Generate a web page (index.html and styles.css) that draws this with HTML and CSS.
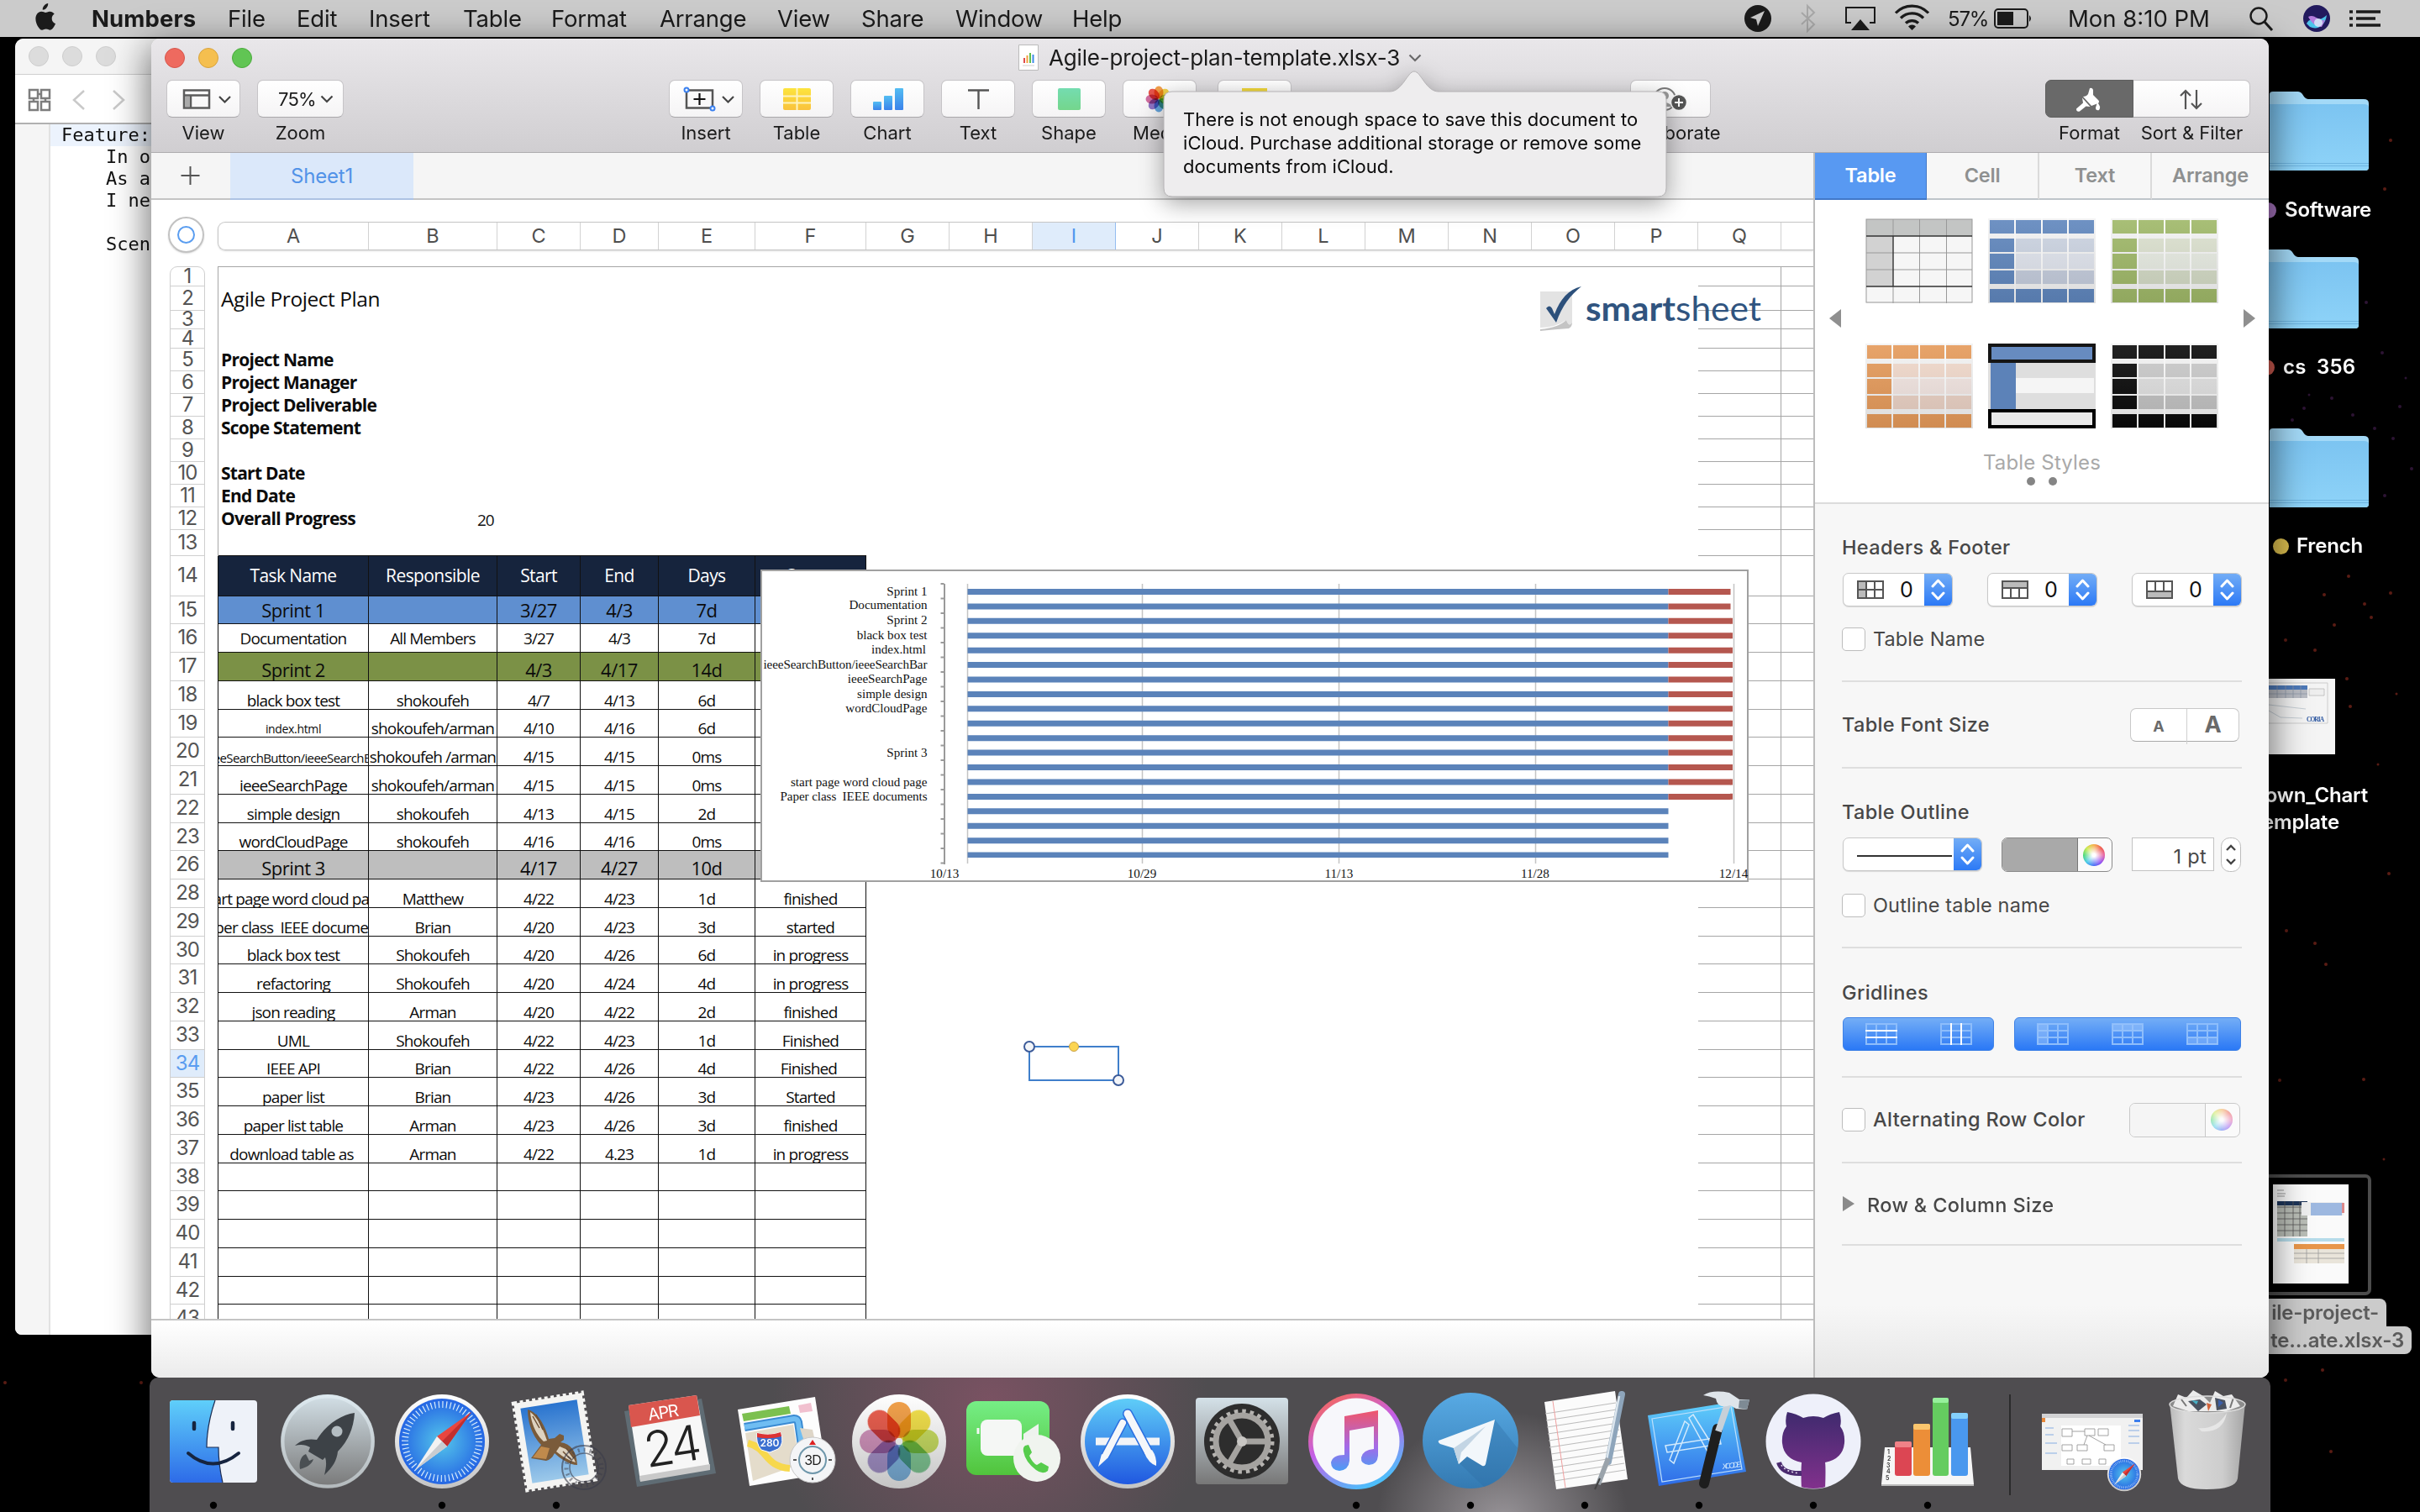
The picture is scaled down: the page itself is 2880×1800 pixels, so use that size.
FILE: index.html
```html
<!DOCTYPE html>
<html lang="en">
<head>
<meta charset="utf-8">
<title>Agile-project-plan-template.xlsx-3</title>
<link rel="stylesheet" href="styles.css">
</head>
<body>
<svg class="defs" aria-hidden="true">
  <defs>
    <linearGradient id="yel" x1="0" y1="0" x2="0" y2="1"><stop offset="0" stop-color="#fde43d"/><stop offset="1" stop-color="#f9c23c"/></linearGradient>
    <linearGradient id="cht" x1="0" y1="0" x2="0" y2="1"><stop offset="0" stop-color="#53bdf3"/><stop offset="1" stop-color="#3b82ea"/></linearGradient>
    <linearGradient id="shp" x1="0" y1="0" x2="0" y2="1"><stop offset="0" stop-color="#74dcb0"/><stop offset="1" stop-color="#74d68c"/></linearGradient>
    <linearGradient id="fold" x1="0" y1="0" x2="0" y2="1"><stop offset="0" stop-color="#7cc4f1"/><stop offset="1" stop-color="#8ed3f8"/></linearGradient>
    <linearGradient id="glass" x1="0" y1="0" x2="0" y2="1"><stop offset="0" stop-color="#fff" stop-opacity=".1"/><stop offset="1" stop-opacity=".09"/></linearGradient>
    <symbol id="folder" viewBox="0 0 118 94">
      <path d="M0 3Q0 0 4 0H34C40 0 40 9 46 9H112Q118 9 118 14V90Q118 94 114 94H0Z" fill="#a3d9f7"/>
      <path d="M0 15H112Q118 15 118 19V90Q118 94 114 94H0Z" fill="url(#fold)"/>
      <path d="M0 85.500H118M0 88.500H118" stroke="#6fb6e2" stroke-width="1"/>
    </symbol>
    <symbol id="tstyle" viewBox="0 0 128 101">
      <rect width="128" height="101" fill="#f3f3f3"/>
      <path d="M2 2h124v16H2zM2 84h124v16H2zM2 24h30v16H2zM2 42h30v18H2zM2 62h30v16H2z" fill="var(--main)"/>
      <path d="M32 24h94v16H32z" fill="var(--l1)"/><path d="M32 42h94v18H32z" fill="var(--l2)"/><path d="M32 62h94v16H32z" fill="var(--l3)"/>
      <path d="M32 0v101M64 0v101M95 0v101" stroke="#fafafa" stroke-width="2"/>
      <rect width="128" height="101" fill="url(#glass)"/>
    </symbol>
    <symbol id="updown" viewBox="0 0 33 40"><path d="M10 16l6.500-7 6.500 7M10 24l6.500 7 6.500-7" fill="none" stroke="#fff" stroke-width="3" stroke-linecap="round" stroke-linejoin="round"/></symbol>
    <symbol id="tgrid" viewBox="0 0 38 26"><path d="M1 1h36v24H1zM1 9h36M1 17h36M13 1v24M25 1v24" fill="none" stroke="#8dbdfb" stroke-width="2"/></symbol>
  </defs>
</svg>

<svg class="stars" viewBox="0 0 2880 1800" aria-hidden="true">
  <g fill="#5a1c14"><circle cx="2795" cy="686" r="2"/><circle cx="2845" cy="706" r="2"/><circle cx="2766" cy="708" r="2"/><circle cx="2814" cy="719" r="2"/><circle cx="2778" cy="744" r="2"/><circle cx="2822" cy="735" r="2"/><circle cx="2755" cy="774" r="2"/><circle cx="2720" cy="762" r="2"/><circle cx="2793" cy="808" r="2"/><circle cx="2797" cy="841" r="2"/><circle cx="2843" cy="1040" r="2"/><circle cx="2755" cy="1123" r="2"/><circle cx="2721" cy="1108" r="2"/><circle cx="2768" cy="1148" r="2"/><circle cx="2813" cy="1285" r="2"/><circle cx="2713" cy="1286" r="2"/><circle cx="2838" cy="225" r="2"/><circle cx="2845" cy="167" r="2"/><circle cx="2852" cy="826" r="1.500"/><circle cx="2830" cy="910" r="1.500"/><circle cx="2780" cy="1520" r="2"/><circle cx="2764" cy="1631" r="2"/><circle cx="2720" cy="1643" r="2"/><circle cx="2774" cy="1728" r="2"/><circle cx="2837" cy="1380" r="1.500"/><circle cx="6" cy="1646" r="2"/><circle cx="168" cy="1646" r="2"/></g>
  <g fill="#2c1433"><circle cx="2816" cy="360" r="2"/><circle cx="2835" cy="420" r="2"/><circle cx="2742" cy="486" r="2"/><circle cx="2800" cy="494" r="2"/><circle cx="2856" cy="484" r="2"/><circle cx="2728" cy="500" r="2"/><circle cx="2826" cy="510" r="2"/><circle cx="2848" cy="522" r="2"/><circle cx="2775" cy="474" r="2"/><circle cx="2870" cy="558" r="2"/><circle cx="2838" cy="590" r="2"/><circle cx="2748" cy="470" r="1.500"/><circle cx="2863" cy="450" r="1.500"/></g>
</svg>

<header class="menubar">
  <svg class="apple" viewBox="1.200 0 22.600 32"><path d="M18 0c.4 3-2.500 7.200-6 7.200C11.600 4 14.800.4 18 0zM22.300 17c0-3.400 2.600-5 2.800-5.200-1.600-2.200-4-2.600-4.800-2.700-2.100-.2-4 1.200-5.100 1.200S12.500 9.200 10.800 9.200C8.500 9.200 6.400 10.500 5.300 12.400c-2.500 4.200-.7 10.500 1.700 13.900 1.100 1.700 2.500 3.600 4.300 3.500 1.700-.1 2.400-1.100 4.500-1.100s2.700 1.100 4.500 1.100c1.900 0 3.100-1.700 4.200-3.400 1.300-1.900 1.800-3.700 1.900-3.800-.2-.1-4.100-1.500-4.100-5.600z" fill="#1b1b1b" transform="translate(-3 1)"/></svg>
  <nav class="menus"><b>Numbers</b><span>File</span><span>Edit</span><span>Insert</span><span>Table</span><span>Format</span><span>Arrange</span><span>View</span><span>Share</span><span>Window</span><span>Help</span></nav>
  <svg class="tray" viewBox="0 0 240 44">
    <circle cx="17" cy="22" r="16" fill="#1b1b1b"/><path d="M25 13L8 21l7 2 2 8z" fill="#ccc"/>
    <path d="M69 15l15 14-8 8V7l8 8-15 14" fill="none" stroke="#a9a9a9" stroke-width="2"/>
    <path d="M128 27h-6V9h34v18h-6" fill="none" stroke="#1b1b1b" stroke-width="2"/><path d="M139 23l11 13h-22z" fill="#1b1b1b"/>
    <g fill="none" stroke="#1b1b1b" stroke-width="3.200"><path d="M181 15.500a27 27 0 0 1 39 0"/><path d="M187 21.500a19 19 0 0 1 27 0"/><path d="M193 27.500a11 11 0 0 1 15 0"/></g><path d="M200.500 36l-4.500-4.500a6 6 0 0 1 9 0z" fill="#1b1b1b"/>
  </svg>
  <span class="pct">57%</span>
  <svg class="batt" viewBox="0 0 46 24"><rect x="1" y="1" width="39" height="22" rx="4" fill="none" stroke="#1b1b1b" stroke-width="2"/><rect x="4" y="4" width="19" height="16" fill="#1b1b1b"/><path d="M42 8q4 4 0 8z" fill="#1b1b1b"/></svg>
  <span class="clock">Mon 8:10 PM</span>
  <svg class="tray2" viewBox="0 0 160 44">
    <circle cx="11" cy="19" r="9.500" fill="none" stroke="#1b1b1b" stroke-width="2.400"/><path d="M18 26l9 10" stroke="#1b1b1b" stroke-width="3"/>
    <circle cx="80" cy="22" r="16" fill="#221a5e"/><path d="M68 28c6-10 10 2 24-10-2 14-12 18-20 14z" fill="#4cc3ea"/><path d="M70 20c8-4 12 6 20 4l-4 8c-6 0-12-4-16-12z" fill="#b37bdc"/><circle cx="82" cy="27" r="5" fill="#d8f2fb" opacity=".8"/>
    <path d="M119 14h4M127 14h29M119 22h4M127 22h23M119 30h4M127 30h29" stroke="#1b1b1b" stroke-width="3.600"/>
  </svg>
</header>

<section class="editor">
  <div class="ed-title"><i></i><i></i><i></i></div>
  <div class="ed-tools">
    <svg viewBox="0 0 162 58"><g fill="none" stroke="#7d7d7d" stroke-width="2.500"><path d="M17 18h10v10H17zM31 18h10v10H31zM17 32h10v10H17zM31 32h10v10H31zM27 23h4M22 28v4M36 28v4"/></g><path d="M82 19l-12 11 12 11M117 19l12 11-12 11" fill="none" stroke="#c9c9c9" stroke-width="2.500"/></svg>
  </div>
  <pre class="code"><span class="cur">Feature:</span>
    In o
    As a
    I ne

    Scen</pre>
</section>

<aside class="desk">
  <svg class="f1"><use href="#folder"/></svg>
  <div class="lab l1"><i class="purple"></i>Software</div>
  <svg class="f2"><use href="#folder"/></svg>
  <div class="lab l2"><i class="red"></i>cs&nbsp; 356</div>
  <svg class="f3"><use href="#folder"/></svg>
  <div class="lab l3"><i class="gold"></i>French</div>
  <svg class="burn" viewBox="0 0 79 90"><rect width="79" height="90" fill="#f4f4f4"/><path d="M0 8h46v5H0z" fill="#4d79b8"/><path d="M0 13h46v10H0z" fill="#b9bcc4"/><path d="M0 18h46M10 8v15M20 8v15M29 8v15M38 8v15" stroke="#8b95a8" stroke-width=".7"/><path d="M0 5h70v48H0" fill="none" stroke="#ccc"/><path d="M48 12h18v8H48z" fill="#eee" stroke="#aaa" stroke-width=".6"/><path d="M0 31l44 5M0 38l14 8 26 1" fill="none" stroke="#b9c3cc" stroke-width=".8"/><text x="45" y="51" font-size="7.500" textLength="21" fill="#2d57a0" font-family="Liberation Serif, serif">CORIA</text></svg>
  <div class="two"><span>own_Chart</span><span>emplate</span></div>
  <div class="sel-thumb"><svg viewBox="0 0 90 118"><rect width="90" height="118" fill="#fafafa"/><path d="M5 20h36v5H5z" fill="#1d3559"/><path d="M5 25h36v37H5z" fill="#b9bdb6"/><path d="M5 27h36M5 34h36M5 41h36M5 48h36M5 55h36M14 20v42M24 20v42M32 20v42" stroke="#555" stroke-width=".8"/><path d="M34 21h50v16H34z" fill="#eee"/><path d="M45 22h37v15H45z" fill="#9db8e0"/><path d="M82 22h3v12h-3z" fill="#d88"/><path d="M5 64h80v4H5z" fill="#b5dcea"/><path d="M25 71h60v6H25z" fill="#e8964a"/><path d="M25 77h60v17H25z" fill="#e9e4da"/><path d="M25 82h60M25 88h60M40 77v17M54 77v17" stroke="#999" stroke-width=".8"/><path d="M5 7h8M5 11h10M5 14h9" stroke="#999"/></svg></div>
  <div class="sel-name"><span>ile-project-</span><span>te...ate.xlsx-3</span></div>
</aside>

<main class="window">
  <div class="chrome">
    <div class="titlebar">
      <i class="close"></i><i class="min"></i><i class="max"></i>
      <svg class="doc" viewBox="0 0 24 31"><path d="M.5.500h23v30H.5z" fill="#fff" stroke="#bbb"/><path d="M6 16h2v6H6z" fill="#e04b4b"/><path d="M9.500 13h2v9h-2z" fill="#f0a13c"/><path d="M13 10h2v12h-2z" fill="#5fbf4a"/><path d="M16.500 12h2v10h-2z" fill="#3d8be8"/><path d="M5 25h14" stroke="#ccc"/></svg>
      <span class="name">Agile-project-plan-template.xlsx-3</span>
      <svg class="chev" viewBox="0 0 16 10"><path d="M1.500 1.500L8 8l6.500-6.500" fill="none" stroke="#6a6a6a" stroke-width="2.200"/></svg>
    </div>
    <div class="tools">
      <div class="tool"><div class="btn w88"><svg viewBox="0 0 88 44"><path d="M21 11.500h30v21H21zM21 17.500h30M29 17.500v15" fill="none" stroke="#5c5c5c" stroke-width="2.500"/><path d="M22 19h6v12h-6z" fill="#aaa"/><path d="M63 19l6.500 6.500L76 19" fill="none" stroke="#444" stroke-width="2.200"/></svg></div>View</div>
      <div class="tool zoom"><div class="btn w103"><span>75%</span><svg class="zc" viewBox="0 0 16 10"><path d="M1.500 1.500L8 8l6.500-6.500" fill="none" stroke="#444" stroke-width="2.200"/></svg></div>Zoom</div>
      <div class="tool ins"><div class="btn w88"><svg viewBox="0 0 88 44"><path d="M21 11.500h31v21H21z" fill="none" stroke="#555" stroke-width="2.500"/><path d="M36.500 15v14M29.500 22h14" stroke="#111" stroke-width="2.200"/><circle cx="21" cy="11" r="2.500" fill="#fff" stroke="#3a80f0" stroke-width="2"/><circle cx="52" cy="33" r="2.500" fill="#fff" stroke="#3a80f0" stroke-width="2"/><path d="M64 19l6.500 6.500L77 19" fill="none" stroke="#444" stroke-width="2.200"/></svg></div>Insert</div>
      <div class="tool"><div class="btn w88"><svg viewBox="0 0 88 44"><rect x="28" y="9" width="33" height="26" rx="2" fill="url(#yel)"/><path d="M28 18.500h33M28 26.500h33M44.500 9v26" stroke="#fdf3c0" stroke-width="2"/></svg></div>Table</div>
      <div class="tool"><div class="btn w88"><svg viewBox="0 0 88 44"><rect x="27" y="25" width="10" height="10" rx="1" fill="url(#cht)"/><rect x="40" y="18" width="10" height="17" rx="1" fill="url(#cht)"/><rect x="53" y="9" width="10" height="26" rx="1" fill="url(#cht)"/></svg></div>Chart</div>
      <div class="tool"><div class="btn w88"><svg viewBox="0 0 88 44"><path d="M32 11.500h25M44.500 11v23" stroke="#555" stroke-width="2.400"/></svg></div>Text</div>
      <div class="tool"><div class="btn w88"><svg viewBox="0 0 88 44"><rect x="31" y="9" width="27" height="26" rx="2" fill="url(#shp)"/></svg></div>Shape</div>
      <div class="tool"><div class="btn w88"><svg viewBox="0 0 88 44"><g transform="translate(43 22)" class="petals"><ellipse cy="-8" rx="5.500" ry="7.500" fill="#f2973a"/><ellipse cy="-8" rx="5.500" ry="7.500" fill="#f3d13b" transform="rotate(45)"/><ellipse cy="-8" rx="5.500" ry="7.500" fill="#a7cf4a" transform="rotate(90)"/><ellipse cy="-8" rx="5.500" ry="7.500" fill="#5cb989" transform="rotate(135)"/><ellipse cy="-8" rx="5.500" ry="7.500" fill="#5aa3e2" transform="rotate(180)"/><ellipse cy="-8" rx="5.500" ry="7.500" fill="#8a6cc7" transform="rotate(225)"/><ellipse cy="-8" rx="5.500" ry="7.500" fill="#d0639a" transform="rotate(270)"/><ellipse cy="-8" rx="5.500" ry="7.500" fill="#e8473c" transform="rotate(315)"/></g></svg></div>Media</div>
      <div class="tool cmt"><div class="btn w88"><svg viewBox="0 0 88 44"><rect x="29" y="9" width="30" height="26" fill="#f3d93b"/></svg></div></div>
      <div class="tool col"><div class="btn w96"><svg viewBox="0 0 96 44"><circle cx="41" cy="22" r="13" fill="none" stroke="#7a7a7a" stroke-width="2"/><circle cx="41" cy="18" r="5" fill="#999"/><path d="M31 31q10-10 20 0z" fill="#999"/><circle cx="58" cy="26" r="9.500" fill="#555" stroke="#f7f7f7" stroke-width="1.500"/><path d="M58 21v10M53 26h10" stroke="#fff" stroke-width="2"/></svg></div>Collaborate</div>
      <div class="tool fmt"><div class="btn dark"><svg viewBox="0 0 104 44"><path d="M52 9q3-1 4 2l0 6 6 6q2 2 0 4L54 30 44 19q4 0 6-3z" fill="#fff"/><path d="M43 20.500L52.500 31l-5-.500-7.500 6q-4 1-4-3l8-7z" fill="#fff"/><path d="M61 26q5 5 2 9-4 1-4-3z" fill="#fff"/></svg></div>Format</div>
      <div class="tool sort"><div class="btn"><svg viewBox="0 0 140 44"><path d="M63 34V12M57 18l6-6 6 6M76 11v22M70 27l6 6 6-6" fill="none" stroke="#555" stroke-width="2.200"/></svg></div>Sort &amp; Filter</div>
    </div>
  </div>

  <div class="work">
    <div class="left">
      <div class="sheets"><svg class="plus" viewBox="0 0 94 54"><path d="M46.500 16v22M35.500 27h22" stroke="#555" stroke-width="2"/></svg><div class="tab">Sheet1</div></div>
      <div class="canvas">
        <div class="cols">
          <div class="origin"><i></i></div>
          <div class="heads"><span class="a">A</span><span class="b">B</span><span class="c">C</span><span class="d">D</span><span class="e">E</span><span class="f">F</span><span>G</span><span>H</span><span class="on">I</span><span>J</span><span>K</span><span>L</span><span>M</span><span>N</span><span>O</span><span>P</span><span>Q</span><span class="rest"></span></div>
        </div>
        <div class="grid">
          <div class="nums"><b class="h23">1</b><b class="h29">2</b><b class="h22">3</b><b class="h23">4</b><b class="h27">5</b><b class="h27">6</b><b class="h27">7</b><b class="h27">8</b><b class="h27">9</b><b class="h27">10</b><b class="h27">11</b><b class="h27">12</b><b class="h31">13</b><b class="h48">14</b><b class="h33">15</b><b>16</b><b>17</b><b>18</b><b class="h33">19</b><b>20</b><b>21</b><b>22</b><b class="h33">23</b><b>26</b><b>28</b><b>29</b><b class="h33">30</b><b>31</b><b>32</b><b>33</b><b class="on h33">34</b><b>35</b><b>36</b><b>37</b><b class="h33">38</b><b>39</b><b>40</b><b>41</b><b class="h33">42</b><b>43</b></div>
          <div class="cells">
            <div class="r h23"><u></u><u></u></div>
            <div class="r h29"><em class="big">Agile Project Plan</em><u></u><u></u></div>
            <div class="r h22"><u></u><u></u></div>
            <div class="r h23"><u></u><u></u></div>
            <div class="r h27"><em>Project Name</em><u></u><u></u></div>
            <div class="r h27"><em>Project Manager</em><u></u><u></u></div>
            <div class="r h27"><em>Project Deliverable</em><u></u><u></u></div>
            <div class="r h27"><em>Scope Statement</em><u></u><u></u></div>
            <div class="r h27"><u></u><u></u></div>
            <div class="r h27"><em>Start Date</em><u></u><u></u></div>
            <div class="r h27"><em>End Date</em><u></u><u></u></div>
            <div class="r h27"><em class="prog">Overall Progress</em><span class="val">20</span><u></u><u></u></div>
            <div class="r h31"><u></u><u></u></div>
            <div class="r t h48 navy"><s class="a">Task Name</s><s class="b">Responsible</s><s class="c">Start</s><s class="d">End</s><s class="e">Days</s><s class="f">Status</s><u></u><u></u></div>
            <div class="r t h33 blue sp up4"><s class="a">Sprint 1</s><s class="b"></s><s class="c">3/27</s><s class="d">4/3</s><s class="e">7d</s><s class="f"></s><u></u><u></u></div>
            <div class="r t up6"><s class="a">Documentation</s><s class="b">All Members</s><s class="c">3/27</s><s class="d">4/3</s><s class="e">7d</s><s class="f"></s><u></u><u></u></div>
            <div class="r t green sp"><s class="a">Sprint 2</s><s class="b"></s><s class="c">4/3</s><s class="d">4/17</s><s class="e">14d</s><s class="f"></s><u></u><u></u></div>
            <div class="r t"><s class="a">black box test</s><s class="b">shokoufeh</s><s class="c">4/7</s><s class="d">4/13</s><s class="e">6d</s><s class="f"></s><u></u><u></u></div>
            <div class="r t h33"><s class="a tiny">index.html</s><s class="b">shokoufeh/arman</s><s class="c">4/10</s><s class="d">4/16</s><s class="e">6d</s><s class="f"></s><u></u><u></u></div>
            <div class="r t"><s class="a small clip">ieeeSearchButton/ieeeSearchBar</s><s class="b">shokoufeh /arman</s><s class="c">4/15</s><s class="d">4/15</s><s class="e">0ms</s><s class="f"></s><u></u><u></u></div>
            <div class="r t"><s class="a">ieeeSearchPage</s><s class="b">shokoufeh/arman</s><s class="c">4/15</s><s class="d">4/15</s><s class="e">0ms</s><s class="f"></s><u></u><u></u></div>
            <div class="r t"><s class="a">simple design</s><s class="b">shokoufeh</s><s class="c">4/13</s><s class="d">4/15</s><s class="e">2d</s><s class="f"></s><u></u><u></u></div>
            <div class="r t h33"><s class="a">wordCloudPage</s><s class="b">shokoufeh</s><s class="c">4/16</s><s class="d">4/16</s><s class="e">0ms</s><s class="f"></s><u></u><u></u></div>
            <div class="r t gray sp"><s class="a">Sprint 3</s><s class="b"></s><s class="c">4/17</s><s class="d">4/27</s><s class="e">10d</s><s class="f"></s><u></u><u></u></div>
            <div class="r t"><s class="a clip">start page word cloud page</s><s class="b">Matthew</s><s class="c">4/22</s><s class="d">4/23</s><s class="e">1d</s><s class="f">finished</s><u></u><u></u></div>
            <div class="r t"><s class="a clip">Paper class&nbsp; IEEE documents</s><s class="b">Brian</s><s class="c">4/20</s><s class="d">4/23</s><s class="e">3d</s><s class="f">started</s><u></u><u></u></div>
            <div class="r t h33"><s class="a">black box test</s><s class="b">Shokoufeh</s><s class="c">4/20</s><s class="d">4/26</s><s class="e">6d</s><s class="f">in progress</s><u></u><u></u></div>
            <div class="r t"><s class="a">refactoring</s><s class="b">Shokoufeh</s><s class="c">4/20</s><s class="d">4/24</s><s class="e">4d</s><s class="f">in progress</s><u></u><u></u></div>
            <div class="r t"><s class="a">json reading</s><s class="b">Arman</s><s class="c">4/20</s><s class="d">4/22</s><s class="e">2d</s><s class="f">finished</s><u></u><u></u></div>
            <div class="r t"><s class="a">UML</s><s class="b">Shokoufeh</s><s class="c">4/22</s><s class="d">4/23</s><s class="e">1d</s><s class="f">Finished</s><u></u><u></u></div>
            <div class="r t h33"><s class="a">IEEE API</s><s class="b">Brian</s><s class="c">4/22</s><s class="d">4/26</s><s class="e">4d</s><s class="f">Finished&nbsp;</s><u></u><u></u></div>
            <div class="r t"><s class="a">paper list</s><s class="b">Brian</s><s class="c">4/23</s><s class="d">4/26</s><s class="e">3d</s><s class="f">Started</s><u></u><u></u></div>
            <div class="r t"><s class="a">paper list table</s><s class="b">Arman</s><s class="c">4/23</s><s class="d">4/26</s><s class="e">3d</s><s class="f">finished</s><u></u><u></u></div>
            <div class="r t"><s class="a">download table as&nbsp;</s><s class="b">Arman</s><s class="c">4/22</s><s class="d">4.23</s><s class="e">1d</s><s class="f">in progress</s><u></u><u></u></div>
            <div class="r t h33"><s class="a"></s><s class="b"></s><s class="c"></s><s class="d"></s><s class="e"></s><s class="f"></s><u></u><u></u></div>
            <div class="r t"><s class="a"></s><s class="b"></s><s class="c"></s><s class="d"></s><s class="e"></s><s class="f"></s><u></u><u></u></div>
            <div class="r t"><s class="a"></s><s class="b"></s><s class="c"></s><s class="d"></s><s class="e"></s><s class="f"></s><u></u><u></u></div>
            <div class="r t"><s class="a"></s><s class="b"></s><s class="c"></s><s class="d"></s><s class="e"></s><s class="f"></s><u></u><u></u></div>
            <div class="r t h33"><s class="a"></s><s class="b"></s><s class="c"></s><s class="d"></s><s class="e"></s><s class="f"></s><u></u><u></u></div>
            <div class="r t"><s class="a"></s><s class="b"></s><s class="c"></s><s class="d"></s><s class="e"></s><s class="f"></s><u></u><u></u></div>
          </div>
        </div>

        <svg class="logo" viewBox="0 0 270 60">
          <path d="M2 7H40V44Q36 50 33 41Q20 50 2 50Z" fill="#e3e3e3"/><path d="M2 52Q24 50 33 41Q36 50 40 44Q40 49 36 51Q20 52 2 54Z" fill="#c4c4c4"/>
          <path d="M9 27q4-5 7 0l3 7C26 16 35 5 51 1 38 11 28 24 21 44z" fill="#2c507b"/>
          <g font-family="Lato, sans-serif" font-size="41" fill="#30547f"><text x="56" y="41.500" font-weight="700" textLength="107" lengthAdjust="spacingAndGlyphs">smart</text><text x="163" y="41.500" font-weight="400" textLength="102" lengthAdjust="spacingAndGlyphs">sheet</text></g>
        </svg>

        <svg class="chart" viewBox="905 678 1176 372">
          <rect x="906" y="679" width="1174" height="370" fill="#fff" stroke="#a0a0a0" stroke-width="2"/>
          <path d="M1151.500 695V1028M1359.500 695V1028M1593.500 695V1028M1827.500 695V1028M2063.500 695V1028" stroke="#c4c4c4" stroke-width="1.500"/>
          <path d="M1124 695V1029" stroke="#9a9a9a" stroke-width="2"/>
          <path d="M1121.500 694V1030" stroke="#9a9a9a" stroke-width="4" stroke-dasharray="2 15.500"/>
          <path d="M1568.500 704V1024" stroke="#5b83ba" stroke-width="834" stroke-dasharray="7 10.420" transform="translate(0 -3)"/>
          <path d="M2022.500 704V959" stroke="#b5574f" stroke-width="74" stroke-dasharray="7 10.420" transform="translate(0 -3)"/>
          <path d="M2060.500 735.800V956" stroke="#b5574f" stroke-width="3" stroke-dasharray="7 10.420"/>
          <g font-family="Liberation Serif, serif" font-size="15.100" fill="#111" text-anchor="end">
            <text x="1103.500" y="708.500">Sprint 1</text><text x="1103.500" y="725">Documentation</text><text x="1103.500" y="743">Sprint 2</text><text x="1103.500" y="761">black box test</text><text x="1102" y="778">index.html</text><text x="1103.500" y="796" textLength="195">ieeeSearchButton/ieeeSearchBar</text><text x="1103.500" y="813">ieeeSearchPage</text><text x="1103.500" y="831">simple design</text><text x="1103.500" y="848">wordCloudPage</text><text x="1103.500" y="901">Sprint 3</text><text x="1103.500" y="936">start page word cloud page</text><text x="1103.500" y="953" textLength="175">Paper class&#160; IEEE documents</text>
          </g>
          <g font-family="Liberation Serif, serif" font-size="15.100" fill="#111" text-anchor="middle"><text x="1124" y="1045">10/13</text><text x="1359" y="1045">10/29</text><text x="1593.500" y="1045">11/13</text><text x="1827" y="1045">11/28</text><text x="2063" y="1045">12/14</text></g>
        </svg>

        <svg class="pick" viewBox="0 0 126 60"><rect x="9" y="10" width="106" height="40" fill="none" stroke="#3f7fcb" stroke-width="2"/><circle cx="9" cy="10" r="6" fill="#f3f5f8" stroke="#3c5b99" stroke-width="2"/><circle cx="115" cy="50" r="6" fill="#f3f5f8" stroke="#3c5b99" stroke-width="2"/><circle cx="62" cy="10" r="5.500" fill="#fcd552" stroke="#c9a24a"/></svg>
      </div>
      <div class="foot"></div>
    </div>

    <div class="insp">
      <div class="itabs"><span class="on">Table</span><span>Cell</span><span>Text</span><span>Arrange</span></div>
      <div class="styles">
        <svg class="arr" viewBox="0 0 14 22"><path d="M14 0v22L0 11z" fill="#8f8f8f"/></svg>
        <div class="thumbs">
          <svg viewBox="0 0 128 101"><rect x="1" y="1" width="126" height="100" fill="#f6f6f6"/><path d="M1 1h126v20H1z" fill="#c3c5c4"/><path d="M1 21h32v60H1z" fill="#d2d2d2"/><path d="M1 41h126M1 61h126M33 1v20M33 81v20M64.500 1v100M96.500 1v100" stroke="#999"/><rect x="1" y="1" width="126" height="99" fill="none" stroke="#999"/><path d="M1 21h126M1 81h126M33 21v60" stroke="#333" stroke-width="1.400"/></svg>
          <svg class="cblue"><use href="#tstyle"/></svg>
          <svg class="cgreen"><use href="#tstyle"/></svg>
          <svg class="corange"><use href="#tstyle"/></svg>
          <svg viewBox="0 0 128 101"><path d="M0 22h128v56H0z" fill="#dedede"/><path d="M33 41h93v18H33z" fill="#f5f5f5"/><path d="M3 22h30v56H3z" fill="#5c82b8"/><rect x="2" y="2" width="124" height="19" fill="#678bc0" stroke="#151515" stroke-width="4"/><rect x="2" y="80" width="124" height="19" fill="#e9e9e9" stroke="#000" stroke-width="4"/></svg>
          <svg class="cblack"><use href="#tstyle"/></svg>
        </div>
        <svg class="arr" viewBox="0 0 14 22"><path d="M0 0v22l14-11z" fill="#8f8f8f"/></svg>
        <div class="cap">Table Styles<div class="dots"><i></i><i></i></div></div>
      </div>

      <div class="sec s1">
        <h4>Headers &amp; Footer</h4>
        <div class="steps">
          <div class="pop"><svg class="ti" viewBox="0 0 32 22"><path d="M1 1h10v20H1z" fill="#bbb"/><path d="M1 1h30v20H1zM1 11h30M11 1v20M21 1v20" fill="none" stroke="#555" stroke-width="2"/></svg>0<svg class="ud"><use href="#updown"/></svg></div>
          <div class="pop"><svg class="ti" viewBox="0 0 32 22"><path d="M1 1h30v8H1z" fill="#bbb"/><path d="M1 1h30v20H1zM1 9h30M11 9v12M21 9v12" fill="none" stroke="#555" stroke-width="2"/></svg>0<svg class="ud"><use href="#updown"/></svg></div>
          <div class="pop"><svg class="ti" viewBox="0 0 32 22"><path d="M1 13h30v8H1z" fill="#bbb"/><path d="M1 1h30v20H1zM1 13h30M11 1v12M21 1v12" fill="none" stroke="#555" stroke-width="2"/></svg>0<svg class="ud"><use href="#updown"/></svg></div>
        </div>
        <label><i class="box"></i>Table Name</label>
      </div>
      <div class="sec s2"><h4>Table Font Size</h4><div class="seg"><b class="sm">A</b><b>A</b></div></div>
      <div class="sec s3">
        <h4>Table Outline</h4>
        <div class="outl"><div class="pop line"><hr><svg class="ud"><use href="#updown"/></svg></div><div class="well"><span></span><i class="wheel"></i></div><div class="pt">1 pt</div><svg class="stepper" viewBox="0 0 24 42"><rect x=".5" y=".5" width="23" height="40" rx="10" fill="#fff" stroke="#bdbdbd"/><path d="M7 15l5-5 5 5M7 26l5 5 5-5" fill="none" stroke="#444" stroke-width="2.400"/></svg></div>
        <label><i class="box"></i><span class="ls">Outline table name</span></label>
      </div>
      <div class="sec s4">
        <h4>Gridlines</h4>
        <div class="gl"><div class="gb g2"><svg viewBox="0 0 38 26"><use href="#tgrid"/><path d="M0 9h38M0 17h38" stroke="#fff" stroke-width="2"/></svg><svg viewBox="0 0 38 26"><use href="#tgrid"/><path d="M13 0v26M25 0v26" stroke="#fff" stroke-width="2"/></svg></div><div class="gb g3"><svg viewBox="0 0 38 26"><use href="#tgrid"/><path d="M1 1h12v24H1z" fill="#9cc6fc" opacity=".5"/></svg><svg viewBox="0 0 38 26"><use href="#tgrid"/><path d="M1 1h36v8H1z" fill="#9cc6fc" opacity=".5"/></svg><svg viewBox="0 0 38 26"><use href="#tgrid"/><path d="M1 17h36v8H1z" fill="#9cc6fc" opacity=".5"/></svg></div></div>
      </div>
      <div class="sec s5"><label><i class="box"></i><span class="md">Alternating Row Color</span></label><div class="well off"><span></span><i class="wheel"></i></div></div>
      <div class="sec s6"><svg viewBox="0 0 14 18"><path d="M0 0l14 9-14 9z" fill="#8a8a8a"/></svg><h4>Row &amp; Column Size</h4></div>
      <div class="ifoot"></div>
    </div>
  </div>

  <div class="bubble">
    <svg viewBox="0 0 602 154"><path d="M12 25H271C286 25 292 1 300 1S314 25 329 25H590Q600 25 600 35V140Q600 150 590 150H12Q2 150 2 140V35Q2 25 12 25Z" fill="#eeedee" stroke="#b4b2b4"/></svg>
    <p>There is not enough space to save this document to<br>iCloud. Purchase additional storage or remove some<br>documents from iCloud.</p>
  </div>
</main>

<footer class="dock">
  <svg viewBox="0 0 136 160"><defs><linearGradient id="fb" x1="0" y1="0" x2="0" y2="1"><stop offset="0" stop-color="#5fcffa"/><stop offset="1" stop-color="#2d6be8"/></linearGradient><linearGradient id="sil" x1="0" y1="0" x2="0" y2="1"><stop offset="0" stop-color="#d4e1e8"/><stop offset="1" stop-color="#777"/></linearGradient><linearGradient id="rim" x1="0" y1="0" x2="0" y2="1"><stop offset="0" stop-color="#fff"/><stop offset="1" stop-color="#c4c4c4"/></linearGradient></defs>
    <rect x="16" y="27" width="104" height="98" rx="4" fill="#eef2f9"/><path d="M20 27H70C64 45 60 65 60 83H74C74 100 76 112 79 125H20Q16 125 16 121V31Q16 27 20 27Z" fill="url(#fb)"/><path d="M70 27C64 45 60 65 60 83H74C74 100 76 112 79 125" fill="none" stroke="#1c2d52" stroke-width="1.200"/><path d="M45 54v7M91 54v7" stroke="#16243f" stroke-width="4.500" stroke-linecap="round"/><path d="M38 90Q67 115 98 90" fill="none" stroke="#16243f" stroke-width="4" stroke-linecap="round"/><circle class="dot" cx="68" cy="152" r="4.200"/></svg>
  <svg viewBox="0 0 136 160"><circle cx="68" cy="76" r="56" fill="url(#sil)"/><circle cx="68" cy="76" r="53.500" fill="none" stroke="#e6f1f5" stroke-width="4" opacity=".55"/><path d="M100 42C84 44 66 56 55 74C44 72 35 75 29 81C36 79 42 80 47 83L45 88 62 98 65 95C67 101 66 108 64 116C74 107 79 98 80 88C92 76 99 60 100 42Z" fill="#3d4247"/><circle cx="79" cy="64" r="6.500" fill="#b4bdc2"/><path d="M42 91C35 94 34 102 35 109C42 107 49 104 51 97L46 99Z" fill="#4a4f53"/></svg>
  <svg viewBox="0 0 136 160"><defs><radialGradient id="sf"><stop offset="0" stop-color="#54c6ea"/><stop offset="1" stop-color="#2566e4"/></radialGradient></defs><g id="saf"><circle cx="68" cy="76" r="56" fill="url(#rim)"/><circle cx="68" cy="76" r="51" fill="url(#sf)"/><circle cx="68" cy="76" r="44" fill="none" stroke="#d9ecfb" stroke-width="8" stroke-dasharray="1.200 3.408"/><path d="M103 41L62 70 74 82Z" fill="#e8463f"/><path d="M103 41L68 76 74 82Z" fill="#c22f2f"/><path d="M36 110L62 70 74 82Z" fill="#f2f2f2"/><path d="M36 110L68 76 74 82Z" fill="#c8ccd0"/></g><circle class="dot" cx="68" cy="152" r="4.200"/></svg>
  <svg viewBox="0 0 136 160"><defs><linearGradient id="sky" x1="0" y1="0" x2="0" y2="1"><stop offset="0" stop-color="#2a74cf"/><stop offset="1" stop-color="#9cc9ea"/></linearGradient></defs><g transform="rotate(-9 66 76)"><rect x="25" y="24" width="82" height="104" fill="#f4f4f2"/><rect x="25" y="24" width="82" height="104" fill="none" stroke="#f4f4f2" stroke-width="5" stroke-dasharray="4 3.400"/><rect x="32" y="31" width="68" height="90" fill="url(#sky)"/></g><path d="M34 38C44 40 54 54 59 73L66 72 72 67 77 69 77 74 73 77C86 79 92 88 93 104C84 104 72 96 66 90Q62 98 56 99L38 96 50 80C40 70 34 54 34 38Z" fill="#7a5b3a"/><path d="M37 41C46 48 52 60 57 75L53 76C44 68 38 54 37 41ZM72 82Q86 86 91 101Q80 98 68 88Z" fill="#ded3c0"/><path d="M40 46l8 14M44 44l8 18M76 88l10 10M80 84l9 12" stroke="#6d5036" stroke-width="1.500"/><path d="M50 82L60 84 56 97 40 95Z" fill="#c08a4c"/><circle cx="101" cy="107" r="26" fill="none" stroke="#3b3c4a" stroke-width="2" opacity=".6"/><circle cx="101" cy="107" r="17" fill="none" stroke="#3b3c4a" stroke-width="1.500" opacity=".6"/><circle cx="101" cy="107" r="21" fill="none" stroke="#3b3c4a" stroke-width="5" stroke-dasharray="2 5" opacity=".5"/><circle class="dot" cx="68" cy="152" r="4.200"/></svg>
  <svg viewBox="0 0 136 160"><path d="M13 40L105 25 122 114 28 130Z" fill="#5f6c74"/><path d="M18 33L99 21 115 108 32 123Z" fill="#f7f7f7"/><path d="M18 33L99 21 103 45 21 59Z" fill="#d9564e"/><path d="M31 117L115 103 115 110 32 124Z" fill="#c9c9c9"/><g font-family="Inter, sans-serif" transform="rotate(-9 64 70)" text-anchor="middle"><text x="64" y="48" font-size="20" fill="#fff" textLength="37">APR</text><text x="67" y="103" font-size="58" font-weight="300" letter-spacing="-3" fill="#222">24</text></g></svg>
  <svg viewBox="0 0 136 160"><path d="M12 38L104 23 118 114 26 129Z" fill="#fdfdfd"/><path d="M17 43L73 34 75 43 19 52Z" fill="#7cc04f"/><path d="M84 33L99 30 101 40 86 42Z" fill="#f1c0cf"/><path d="M21 66L78 56 86 103 30 123Z" fill="#e4dccb"/><path d="M20 59L79 49Q83 49 84 53L90 95" fill="none" stroke="#3a8bd3" stroke-width="10"/><path d="M20 59L79 49Q83 49 84 53L90 95" fill="none" stroke="#6fbdf2" stroke-width="6"/><path d="M24 78C48 84 44 106 74 108" fill="none" stroke="#f7d84c" stroke-width="8"/><path d="M86 60L101 62 106 85 92 80Z" fill="#ded6c8"/><path d="M35 66Q50 70 63 65Q68 78 60 85L50 89 40 86Q33 78 35 66Z" fill="#3b6fd0" stroke="#fff"/><path d="M35 66Q50 70 63 65L64 70Q50 74 35 71Z" fill="#d33"/><text x="50" y="82" font-size="12" font-weight="600" fill="#fff" text-anchor="middle" font-family="Inter, sans-serif">280</text><circle cx="101" cy="98" r="27" fill="#f4f5f7" stroke="#c8c8c8"/><circle cx="101" cy="98" r="16" fill="none" stroke="#6f97ab" stroke-width="2"/><path d="M101 74l4 6h-8z" fill="#d22"/><path d="M78 98h4M120 98h4M101 119v3" stroke="#222" stroke-width="1.500"/><text x="101" y="104" font-size="16" fill="#222" text-anchor="middle" font-family="Inter, sans-serif" letter-spacing="-1">3D</text></svg>
  <svg viewBox="0 0 136 160"><circle cx="68" cy="76" r="56" fill="url(#rim)"/><g transform="translate(68 76)" class="petals"><rect x="-14" y="-47" width="28" height="43" rx="14" fill="#f29a3c"/><rect x="-14" y="-47" width="28" height="43" rx="14" fill="#f2df3c" transform="rotate(45)"/><rect x="-14" y="-47" width="28" height="43" rx="14" fill="#c5dc55" transform="rotate(90)"/><rect x="-14" y="-47" width="28" height="43" rx="14" fill="#79c98f" transform="rotate(135)"/><rect x="-14" y="-47" width="28" height="43" rx="14" fill="#77b3e3" transform="rotate(180)"/><rect x="-14" y="-47" width="28" height="43" rx="14" fill="#a08cc9" transform="rotate(225)"/><rect x="-14" y="-47" width="28" height="43" rx="14" fill="#cf8cb8" transform="rotate(270)"/><rect x="-14" y="-47" width="28" height="43" rx="14" fill="#e8503f" transform="rotate(315)"/></g></svg>
  <svg viewBox="0 0 136 160"><defs><linearGradient id="ft" x1="0" y1="0" x2="0" y2="1"><stop offset="0" stop-color="#76ee86"/><stop offset="1" stop-color="#51c43c"/></linearGradient></defs><rect x="12" y="28" width="99" height="88" rx="12" fill="url(#ft)"/><rect x="29" y="50" width="49" height="43" rx="8" fill="#f5f7f5"/><path d="M80 67L98 55V88L80 77Z" fill="#eef3ee"/><path d="M26 60v7" stroke="#f5f7f5" stroke-width="3"/><circle cx="96" cy="96" r="28" fill="#f0f4ef"/><path d="M82 81l4-1 4 9-3 4q4 9 9 11l5-3 9 5-1 5q-6 5-14-1-13-10-15-22-1-5 2-7z" fill="#56cc4c"/></svg>
  <svg viewBox="0 0 136 160"><defs><linearGradient id="as" x1="0" y1="0" x2="0" y2="1"><stop offset="0" stop-color="#5fcdf8"/><stop offset="1" stop-color="#2058e0"/></linearGradient></defs><circle cx="68" cy="76" r="56" fill="url(#rim)"/><circle cx="68" cy="76" r="51" fill="url(#as)"/><path d="M30 76H106" stroke="#f2f4f7" stroke-width="9"/><path d="M62 54L42 92" stroke="#2c6fe0" stroke-width="11" stroke-linecap="round"/><path d="M62 54L42 92" stroke="#f5f7fa" stroke-width="8" stroke-linecap="round"/><path d="M37 91l8 4-12 11z" fill="#f5f7fa"/><path d="M68 43L92 88" stroke="#2c6fe0" stroke-width="12" stroke-linecap="round"/><path d="M68 43L92 88" stroke="#f5f7fa" stroke-width="9" stroke-linecap="round"/><path d="M88 90l9-4q6 9 5 19-9-3-14-15z" fill="#f5f7fa"/></svg>
  <svg viewBox="0 0 136 160"><rect x="13" y="24" width="110" height="103" rx="4" fill="url(#sil)"/><circle cx="68" cy="76" r="45" fill="#2d2d2d"/><circle cx="68" cy="76" r="36" fill="none" stroke="#b5b3b0" stroke-width="5" stroke-dasharray="4.500 4.924"/><circle cx="68" cy="76" r="31" fill="none" stroke="#a5a3a0" stroke-width="7"/><path d="M68 76H98M68 76L53 50M68 76L53 102" stroke="#a5a3a0" stroke-width="7"/><circle cx="68" cy="76" r="6" fill="#c8c6c3"/></svg>
  <svg viewBox="0 0 136 160"><defs><linearGradient id="it" x1=".1" y1="0" x2=".6" y2="1"><stop offset="0" stop-color="#fb6a4a"/><stop offset=".5" stop-color="#c45ee8"/><stop offset="1" stop-color="#4ac0fb"/></linearGradient><linearGradient id="itn" x1="0" y1="0" x2="0" y2="1"><stop offset="0" stop-color="#f0566a"/><stop offset=".6" stop-color="#a46ae8"/><stop offset="1" stop-color="#4b9cf5"/></linearGradient></defs><circle cx="68" cy="76" r="57" fill="url(#it)"/><circle cx="68" cy="76" r="51.500" fill="#f7f7fb"/><path d="M54 46L94 39V93Q93 104 83 104Q73 103 74 95Q76 86 89 85V58L60 63V99Q59 110 48 111Q38 110 38 101Q40 92 54 92Z" fill="url(#itn)"/><circle class="dot" cx="68" cy="152" r="4.200"/></svg>
  <svg viewBox="0 0 136 160"><defs><linearGradient id="tg" x1="0" y1="0" x2="0" y2="1"><stop offset="0" stop-color="#58aae4"/><stop offset="1" stop-color="#347ab2"/></linearGradient></defs><circle cx="68" cy="75" r="57" fill="url(#tg)"/><path d="M97 50L124 84Q112 122 84 130L55 102Z" fill="#2d6da3" opacity=".35"/><path d="M97 50L30 75Q29 77 32 79L48 84 54 103 64 94 82 105Q85 106 86 103Z" fill="#f2f7fb"/><path d="M48 84L86 58 57 89 54 103Z" fill="#c3d5e4"/><circle class="dot" cx="68" cy="152" r="4.200"/></svg>
  <svg viewBox="0 0 136 160"><path d="M20 29L104 16 119 121 34 133Z" fill="#fbfbfb"/><g stroke="#bcbcbc" stroke-width="1.200"><path d="M21 43L105 30M22 51L106 38M23 59L107 46M24 67L108 54M25 75L109 62M26 83L110 70M28 91L112 78M29 99L113 86M30 107L114 94M31 115L115 102M32 123L116 110"/></g><path d="M30 28L45 131" stroke="#f0a0a0"/><path d="M112 20L96 100" stroke="#8ea5bb" stroke-width="8" stroke-linecap="round"/><path d="M109 22L94 98" stroke="#dce6ee" stroke-width="2.500"/><path d="M96 96L84 127" stroke="#9aa3ab" stroke-width="6"/><path d="M86 120L80 133" stroke="#444" stroke-width="2"/><circle class="dot" cx="68" cy="152" r="4.200"/></svg>
  <svg viewBox="0 0 136 160"><path d="M7 45L108 29 124 112 20 129Z" fill="url(#fb)"/><path d="M12 49L106 34 119 109 24 124Z" fill="none" stroke="#bfe0fb" stroke-width="1.200"/><path d="M28 81L92 71 94 79 30 89ZM61 44L86 84 78 88 56 48ZM56 56L38 102 33 98 51 52Z" fill="none" stroke="#d3eafc" stroke-width="1.500"/><text x="96" y="109" font-size="9" textLength="23" font-family="Liberation Sans, sans-serif" font-style="italic" fill="#d3eafc" transform="rotate(-8 96 109)">XCODE</text><path d="M90 61L74 126" stroke="#1e1e1e" stroke-width="12" stroke-linecap="round"/><path d="M102 32L91 64" stroke="#c7d0d8" stroke-width="8"/><path d="M73 21Q84 14 104 18L116 26 128 26 125 38 112 37 105 33Q90 38 88 25Q80 22 73 21Z" fill="#dfe5ea"/><path d="M116 27L128 26 125 38 115 36Z" fill="#7e8a94"/><circle class="dot" cx="68" cy="152" r="4.200"/></svg>
  <svg viewBox="0 0 136 160"><defs><linearGradient id="gh" x1="0" y1="0" x2="0" y2="1"><stop offset="0" stop-color="#3f2a6e"/><stop offset="1" stop-color="#83318d"/></linearGradient><clipPath id="ghc"><circle cx="68" cy="76" r="56"/></clipPath></defs><circle cx="68" cy="76" r="56.500" fill="#eef0fa"/><g clip-path="url(#ghc)"><path d="M37 41Q48 43 56 48Q68 44 80 48Q88 43 99 41Q102 50 100 58Q106 66 105 78Q103 97 82 101Q83 106 82 134H54Q53 112 54 101Q33 97 31 78Q30 66 36 58Q34 50 37 41Z" fill="url(#gh)"/></g><path d="M27 101Q31 115 54 114" fill="none" stroke="#4b2b70" stroke-width="6"/><path d="M30 104Q34 112 52 114" fill="none" stroke="#e6def0" stroke-width="1.500" stroke-dasharray="2 3"/><circle class="dot" cx="68" cy="152" r="4.200"/></svg>
  <svg viewBox="0 0 136 160"><path d="M17 83H119L123 127H13Z" fill="#f6f6f6"/><path d="M13 127H123V129H13Z" fill="#bbb"/><g font-size="7" fill="#333" font-family="Inter, sans-serif" font-weight="600"><text x="20" y="91">1</text><text x="20" y="99">2</text><text x="19" y="107">3</text><text x="19" y="114">4</text><text x="18" y="122">5</text></g><rect x="29" y="76" width="20" height="41" rx="3" fill="#dc4653"/><rect x="29" y="76" width="20" height="7" rx="2" fill="#f08287"/><rect x="51" y="55" width="20" height="62" rx="3" fill="#ec8e38"/><rect x="51" y="55" width="20" height="7" rx="2" fill="#fbc66e"/><rect x="74" y="24" width="19" height="93" rx="3" fill="#65cc60"/><rect x="74" y="24" width="19" height="6" rx="2" fill="#96f09c"/><rect x="96" y="42" width="20" height="75" rx="3" fill="#4a98ee"/><rect x="96" y="42" width="20" height="7" rx="2" fill="#84d0fb"/><circle class="dot" cx="68" cy="152" r="4.200"/></svg>
  <div class="sep"></div>
  <svg viewBox="0 0 136 160"><rect x="8" y="43" width="120" height="67" fill="#f1f1f1"/><rect x="8" y="43" width="120" height="5" fill="#d2d2d4"/><path d="M8 48h4v5H8z" fill="#e8883a"/><rect x="31" y="57" width="71" height="48" fill="#fff"/><g fill="none" stroke="#999" stroke-width=".9"><path d="M32 61h12v9H32zM59 61h12v8H59zM75 61h12v8H75zM32 80h12v7H32zM50 80h12v7H50zM82 80h12v7H82zM38 97h8v6h-8zM56 97h10v6H56zM76 97h8v6h-8zM62 69l-4 11M64 69l20 11M44 64h15"/></g><path d="M111 57h13M111 63h13M111 70h13M111 78h13M12 60h10M12 68h10M12 78h14M12 90h14" stroke="#a9c3e8" stroke-width="1.500"/><rect x="118" y="50" width="7" height="3" fill="#3b7ded"/><use href="#saf" transform="translate(106 115) scale(.36) translate(-68 -76)"/></svg>
  <svg viewBox="0 0 136 160"><defs><linearGradient id="tr" x1="0" y1="0" x2="1" y2="0"><stop offset="0" stop-color="#b9b9b9"/><stop offset=".2" stop-color="#dadada"/><stop offset=".7" stop-color="#cdcdcd"/><stop offset="1" stop-color="#a5a5a5"/></linearGradient></defs><path d="M24 30L114 30 105 120Q103 133 68 133Q37 133 34 120Z" fill="url(#tr)"/><ellipse cx="69" cy="32" rx="45" ry="10" fill="#8c8c8c"/><path d="M28 34L34 20 44 24 52 15 64 22 72 30 78 16 88 22 98 20 108 34 92 40H46Z" fill="#ececec"/><path d="M46 28l14-2 8 6-10 8zM78 24l12 3 2 10-12 2z" fill="#4a5260"/><path d="M50 27l8 1-2 4z" fill="#4ab3c8"/><path d="M68 30l6 2-4 8z" fill="#d2653c"/><path d="M82 26l6 4-6 5z" fill="#3b5fa8"/><path d="M38 26l6 8M100 24l-4 12" stroke="#777" stroke-width="2"/><ellipse cx="69" cy="32" rx="45" ry="10" fill="none" stroke="#dcdcdc" stroke-width="1.500"/><path d="M58 60Q80 62 92 42Q88 66 62 64Z" fill="#e6e6e6"/></svg>
</footer>
</body>
</html>
```
FILE: styles.css
```css
* { box-sizing: border-box; }
html, body { margin: 0; height: 100%; }
body {
  position: relative; width: 2880px; height: 1800px; overflow: hidden; background: #000;
  font-family: Inter, "Liberation Sans", sans-serif; color: #1b1b1b;
}
i, em, s, u { font-style: normal; text-decoration: none; }
svg { display: block; flex: none; }
.defs { position: absolute; width: 0; height: 0; }
.stars { position: absolute; inset: 0; width: 2880px; height: 1800px; }

/* menu bar */
.menubar { position: absolute; top: 0; left: 0; width: 2880px; height: 44px; background: #cbcbcb; display: flex; align-items: center; font-size: 27.5px; letter-spacing: -0.2px; white-space: nowrap; }
.apple { width: 25px; height: 34px; margin-left: 42px; margin-bottom: 5px; }
.menus { display: grid; grid-template-columns: 162px 82px 86px 112px 105px 129px 140px 100px 112px 139px 80px; margin-left: 42px; width: 1247px; line-height: 43px; }
.menus b { letter-spacing: 0.1px; }
.tray { width: 240px; height: 44px; margin-left: 719px; }
.pct { width: 55px; margin-left: 3px; font-size: 24px; letter-spacing: -1.2px; }
.batt { width: 46px; height: 24px; }
.clock { width: 216px; margin-left: 42px; line-height: 43px; letter-spacing: 0; }
.tray2 { width: 160px; height: 44px; }

/* text editor behind */
.editor { position: absolute; left: 18px; top: 46px; width: 400px; height: 1543px; background: #fff; border-radius: 10px 0 0 8px; overflow: hidden; }
.ed-title { height: 43px; background: #f5f5f5; border-bottom: 1px solid #cfcfcf; display: flex; align-items: center; gap: 16px; padding-left: 16px; }
.ed-title i { width: 24px; height: 24px; border-radius: 50%; background: #dcdcdc; border: 1px solid #cdcdcd; }
.ed-tools { height: 59px; border-bottom: 2px solid #b1b1b1; }
.ed-tools svg { width: 162px; height: 58px; }
.code { margin: 0; padding-left: 55px; height: 1441px; background: linear-gradient(90deg, #f5f5f5 40px, #e2e2e2 40px, #e2e2e2 42px, #fff 42px); font: 22px/26px "DejaVu Sans Mono", monospace; color: #111; }
.cur { display: block; margin-left: -13px; padding-left: 13px; background: #ecf3fd; margin-bottom: -26px; height: 26px; }

/* desktop */
.desk { position: absolute; left: 2700px; top: 0; width: 180px; height: 1640px; display: flex; flex-direction: column; align-items: flex-start; color: #fff; font-weight: 600; font-size: 24px; letter-spacing: -0.2px; line-height: 30px; }
.desk .f1 { width: 118px; height: 94px; margin: 109px 0 0 1px; }
.desk .f2 { width: 118px; height: 94px; margin: 32px 0 0 -11px; }
.desk .f3 { width: 118px; height: 94px; margin: 58px 0 0 1px; }
.lab { display: flex; align-items: center; white-space: nowrap; }
.lab i { width: 19px; height: 19px; border-radius: 50%; }
.l1 { margin-top: 32px; } .l2 { margin-top: 31px; } .l3 { margin-top: 31px; }
.l1 i { background: #a573bd; margin: 0 10px 0 -10px; }
.l2 i { background: #cb5a4f; margin: 0 10px 0 -12px; }
.l2 { letter-spacing: .2px; }
.l3 i { background: #d9bc4e; margin: 0 9px 0 5px; }
.burn { width: 79px; height: 90px; margin-top: 143px; }
.two { display: flex; flex-direction: column; align-items: center; line-height: 32px; margin: 33px 0 0 -4px; width: 122px; white-space: nowrap; }
.two span:first-child { align-self: flex-end; }
.two span:last-child { margin-left: -22px; align-self: flex-start; padding-left: 18px; }
.sel-thumb { width: 132px; height: 144px; margin: 403px 0 0 -10px; border: 4px solid #4c4c4c; border-radius: 7px; display: flex; padding: 8px 0 0 11px; }
.sel-thumb svg { width: 90px; height: 118px; }
.sel-name { display: flex; flex-direction: column; align-items: flex-start; margin-top: 4px; color: #5c5c5c; white-space: nowrap; line-height: 33px; }
.sel-name span { background: #cbcbcb; text-align: right; }
.sel-name span:first-child { width: 140px; padding-right: 9px; border-radius: 0 8px 0 0; }
.sel-name span:last-child { width: 170px; padding-right: 9px; border-radius: 0 8px 8px 0; }

/* Numbers window */
.window { position: absolute; left: 180px; top: 46px; width: 2520px; height: 1594px; border-radius: 10px; background: #fff; box-shadow: 0 12px 44px 4px rgba(0,0,0,.55); display: flex; flex-direction: column; }
.chrome { height: 136px; background: linear-gradient(#e9e7ea, #d0ced1); border-bottom: 1.5px solid #adabae; border-radius: 10px 10px 0 0; }
.titlebar { height: 45px; display: flex; align-items: center; padding-left: 16px; }
.titlebar i { width: 24px; height: 24px; border-radius: 50%; margin-right: 16px; }
.close { background: #ee6a5f; border: 1px solid #d6554b; } .min { background: #f5bf4f; border: 1px solid #d8a33c; } .max { background: #61c554; border: 1px solid #4aab3c; }
.doc { width: 24px; height: 31px; margin-left: 896px; }
.name { font-size: 26px; width: 418px; margin-left: 12px; white-space: nowrap; letter-spacing: -0.18px; }
.chev { width: 16px; height: 10px; margin-left: 10px; }
.tools { display: flex; padding: 4px 0 0 18px; font-size: 22px; line-height: 28px; }
.tool { display: flex; flex-direction: column; align-items: center; white-space: nowrap; width: 88px; margin-right: 20px; }
.btn { height: 45px; width: 88px; border-radius: 7px; background: linear-gradient(#fff, #f5f4f5); border: 1px solid #c6c4c7; border-bottom-color: #a9a7aa; margin-bottom: 4px; display: flex; align-items: center; justify-content: center; }
.btn svg { height: 44px; flex: none; }
.w88 svg { width: 88px; }
.zoom { width: 103px; } .w103 { width: 103px; padding-left: 13px; }
.btn .zc { width: 16px; height: 10px; margin-left: 5px; }
.w103 span { letter-spacing: -0.8px; }
.ins { margin-left: 367px; }
.cmt { margin-left: 5px; }
.col { width: 96px; margin-left: 383px; } .w96 { width: 96px; } .w96 svg { width: 96px; }
.fmt { width: 105px; margin-left: 378px; margin-right: 0; }
.fmt .btn { width: 105px; background: #696969; border-color: #5e5e5e; border-radius: 7px 0 0 7px; } .fmt svg { width: 104px; }
.sort { width: 139px; margin: 0; } .sort .btn { width: 139px; border-radius: 0 7px 7px 0; border-left: 0; } .sort svg { width: 140px; }

.work { flex: 1; display: flex; min-height: 0; }
.left { width: 1980px; border-right: 2px solid #bcbcbc; display: flex; flex-direction: column; }
.sheets { height: 56px; background: #f5f5f5; border-bottom: 2px solid #c4c4c4; display: flex; }
.plus { width: 94px; height: 54px; }
.tab { width: 218px; background: #dbe8fa; color: #5293e8; font-size: 24px; letter-spacing: -0.2px; line-height: 56px; text-align: center; height: 56px; border-bottom: 2px solid #adc3e4; }
.canvas { position: relative; height: 1332px; overflow: hidden; background: #fff; }
.foot { flex: 1; border-top: 2px solid #c4c4c4; background: linear-gradient(#fff, #ebebeb); border-radius: 0 0 0 10px; }

.cols { display: flex; height: 79px; padding-top: 20px; }
.origin { flex: none; width: 43px; height: 43px; margin-left: 20px; border: 2px solid #c2c2c2; border-radius: 50%; display: flex; align-items: center; justify-content: center; box-shadow: 0 1px 2px rgba(0,0,0,.15); }
.origin i { width: 21px; height: 21px; border: 2px solid #5a9df0; border-radius: 50%; }
.heads { flex: 1; min-width: 0; margin: 6px 0 0 16px; height: 34px; border: 1px solid #c6c6c6; border-right: 0; border-radius: 9px 0 0 9px; display: flex; font-size: 23.5px; line-height: 32px; text-align: center; color: #4f4f4f; box-shadow: 0 1px 2px rgba(0,0,0,.15); }
.heads span { flex: none; width: 99px; border-right: 1px solid #d2d2d2; }
.heads .rest { flex: 1; border: 0; }
.heads .on { background: #dfecfb; color: #4f97ee; border-color: #94bdf0; }
.a.a { width: 179px; } .b.b { width: 153px; } .c.c { width: 99px; } .d.d { width: 93px; } .e.e { width: 115px; } .f.f { width: 132px; }

.grid { display: flex; align-items: flex-start; }
.nums { width: 42px; margin-left: 22px; border: 1px solid #cfcfcf; border-radius: 9px 9px 0 0; font-size: 24px; color: #555; }
.nums b { display: flex; align-items: center; justify-content: center; font-weight: 400; height: 34px; border-bottom: 1px solid #cfcfcf; padding-bottom: 2px; letter-spacing: -0.9px; }
.nums .on { background: #dfecfb; color: #5a9cf0; }
.cells { flex: 1; margin-left: 15px; border-top: 1px solid #a6a6a6; border-left: 1px solid #a6a6a6; font-family: "Open Sans", "Noto Sans", sans-serif; }
.r { display: flex; height: 34px; justify-content: flex-end; }
.r u { width: 99px; border-right: 1px solid #a6a6a6; border-bottom: 1px solid #a6a6a6; }
.r u:last-child { width: 38px; border-right: 0; }
.r em { margin-right: auto; padding-left: 3px; font: 700 21px/26px "Open Sans", sans-serif; letter-spacing: -0.75px; color: #0c0c0c; white-space: nowrap; }
.r em.big { font: 400 24.5px/29px "Open Sans", sans-serif; letter-spacing: -0.45px; }
.r em.prog { width: 308px; margin-right: 0; }
.r .val { font-size: 19px; line-height: 30px; letter-spacing: -1px; margin-right: auto; color: #111; }
.nums .h22, .r.h22 { height: 22px; } .nums .h23, .r.h23 { height: 23px; } .nums .h27, .r.h27 { height: 27px; } .nums .h29, .r.h29 { height: 29px; } .nums .h31, .r.h31 { height: 31px; } .nums .h33, .r.h33 { height: 33px; } .nums .h48, .r.h48 { height: 48px; }
.r s { display: flex; align-items: flex-end; justify-content: center; white-space: nowrap; border-right: 1px solid #111; border-bottom: 1px solid #111; font-size: 19px; line-height: 20px; letter-spacing: -0.85px; color: #0c0c0c; }
.r .clip { overflow: hidden; }
.t { box-shadow: -1px 0 #111; }
.r .f { margin-right: auto; }
.sp s { font-size: 22px; line-height: 26px; letter-spacing: -0.5px; }
.up4 s { padding-bottom: 3px; } .up6 s { padding-bottom: 6px; }
.navy s { background: #16243d; color: #fff; font-size: 21px; align-items: center; box-shadow: 0 -1px #111; letter-spacing: -0.6px; padding-bottom: 2px; }
.blue s { background: #5f8fd0; } .green s { background: #7b9146; } .gray s { background: #bebebe; }
.r .tiny { font-size: 14px; line-height: 18px; letter-spacing: -0.35px; } .r .small { font-size: 15px; line-height: 18px; letter-spacing: -0.6px; }

.logo { position: absolute; left: 1651px; top: 102px; width: 270px; height: 60px; }
.chart { position: absolute; left: 725px; top: 440px; width: 1176px; height: 372px; }
.pick { position: absolute; left: 1036px; top: 998px; width: 126px; height: 60px; }

/* inspector */
.insp { flex: 1; background: #f7f7f7; display: flex; flex-direction: column; font-size: 23.5px; color: #474747; border-radius: 0 0 10px 0; }
.itabs { height: 56px; display: grid; grid-template-columns: 133px 134px 134px 1fr; font-weight: 600; color: #8e9090; text-align: center; line-height: 54px; letter-spacing: -0.2px; }
.itabs span { border-right: 2px solid #dadada; border-bottom: 2px solid #bfc5ca; }
.itabs span:last-child { border-right: 0; }
.itabs .on { background: #5899f2; color: #fff; border-color: #4178c8; border-right-width: 1px; }
.styles { height: 362px; background: #fff; border-bottom: 2px solid #dcdcdc; display: grid; grid-template-columns: 13px 420px 13px; column-gap: 30px; padding: 22px 17px 0; align-items: center; grid-template-rows: 250px auto; }
.styles > .arr { width: 14px; height: 22px; margin-bottom: 12px; }
.thumbs { display: grid; grid-template-columns: repeat(3, 128px); gap: 47px 18px; height: 250px; }
.thumbs svg { width: 128px; height: 101px; }
.cblue { --main: #5f86bd; --l1: #ccd4e2; --l2: #dfe3ec; --l3: #c3cbdb; }
.cgreen { --main: #9fb868; --l1: #dce1cf; --l2: #e6eae1; --l3: #d2d9c4; }
.corange { --main: #e59a5a; --l1: #f1d9cb; --l2: #f1e4e0; --l3: #e9d0c3; }
.cblack { --main: #0a0a0a; --l1: #cacaca; --l2: #dedede; --l3: #c0c0c0; }
.cap { grid-column: 1 / 4; text-align: center; color: #a9a9a9; font-size: 24px; line-height: 30px; margin-top: 5px; letter-spacing: .15px; }
.dots { display: flex; justify-content: center; gap: 16px; margin-top: 2px; }
.dots i { width: 10px; height: 10px; border-radius: 50%; background: #858585; }
.sec { margin: 0 32px; border-bottom: 2px solid #dedede; }
.sec h4 { margin: 0; font-weight: 500; font-size: 23.5px; line-height: 32px; letter-spacing: .35px; }
.s1 { height: 212px; padding-top: 36px; }
.steps { display: flex; gap: 42px; margin: 14px 0 24px 1px; }
.pop { width: 131px; height: 40px; border: 1px solid #c8c8c8; border-radius: 7px; background: #fff; display: flex; align-items: center; font-size: 25px; color: #111; overflow: hidden; box-shadow: 0 1px 1px rgba(0,0,0,.12); }
.steps .pop + .pop { margin-left: -1px; }
.ti { width: 32px; height: 22px; margin: 0 19px 0 16px; }
.ud { width: 33px; height: 40px; margin-left: auto; background: linear-gradient(#74aef6, #2a78f6); }
label { display: flex; align-items: center; line-height: 30px; gap: 9px; white-space: nowrap; letter-spacing: .1px; }
.box { width: 28px; height: 28px; border: 1.5px solid #bdbdbd; border-radius: 5px; background: #fff; }
.s2 { height: 103px; display: flex; align-items: center; justify-content: space-between; padding-right: 3px; }
.seg { width: 130px; height: 40px; border: 1px solid #c8c8c8; border-bottom-color: #aaa; border-radius: 7px; background: #fff; display: grid; grid-template-columns: 67px 1fr; text-align: center; line-height: 38px; color: #6a6a6a; font-size: 27px; }
.seg .sm { font-size: 18px; border-right: 1px solid #d0d0d0; line-height: 42px; }
.s3 { height: 214px; padding-top: 36px; }
.outl { display: flex; margin: 14px 0 25px 1px; height: 41px; }
.pop.line { width: 166px; } .line hr { width: 113px; margin: 4px 0 0 16px; border: 0; border-top: 2px solid #333; }
.well { width: 132px; height: 41px; margin-left: 23px; border: 1.5px solid #8a8a8a; border-radius: 7px; display: flex; overflow: hidden; background: #fafafa; align-items: center; }
.well span { width: 90px; height: 41px; background: #a9a9a9; border-right: 1.5px solid #777; }
.wheel { width: 26px; height: 26px; border-radius: 50%; margin-left: 6px; background: radial-gradient(#fff 10%, rgba(255,255,255,0) 72%), conic-gradient(from 90deg, #e4559a, #8a3ff0, #3b62f5, #34c5e8, #3ad66a, #c8e83a, #f5a53a, #ee4a3a, #e4559a); }
.pt { width: 98px; margin-left: 23px; height: 40px; border: 1.5px solid #c2c2c2; background: #fff; text-align: right; padding-right: 8px; line-height: 44px; letter-spacing: .3px; }
.stepper { width: 24px; height: 42px; margin-left: 8px; }
.ls { letter-spacing: .15px; }
.s4 { height: 154px; padding-top: 37px; }
.gl { display: flex; gap: 24px; margin: 13px 0 0 1px; }
.gb { height: 40px; border-radius: 6px; background: linear-gradient(#74aef6, #2a78f6); border: 1px solid #3f82e6; display: flex; align-items: center; justify-content: space-around; }
.gb svg { width: 38px; height: 26px; }
.g2 { width: 180px; } .g3 { width: 270px; }
.s5 { height: 102px; display: flex; align-items: center; justify-content: space-between; padding-right: 2px; }
.md { font-weight: 500; letter-spacing: .35px; }
.well.off { border-color: #c9c9c9; } .off span { background: #f5f5f5; border-color: #c9c9c9; } .off .wheel { opacity: .5; }
.s6 { height: 98px; display: flex; align-items: center; padding-top: 4px; } .s6 svg { width: 14px; height: 18px; margin: 0 15px 4px 1px; }
.ifoot { flex: 1; background: linear-gradient(#f7f7f7 45%, #e6e6e6); border-radius: 0 0 10px 0; }

/* iCloud bubble */
.bubble { position: absolute; left: 1203px; top: 38px; width: 602px; height: 154px; filter: drop-shadow(0 8px 14px rgba(0,0,0,.35)); }
.bubble svg { width: 602px; height: 154px; margin-bottom: -154px; }
.bubble p { position: relative; margin: 0; padding: 44px 0 0 25px; font-size: 22px; line-height: 28px; color: #0c0c0c; white-space: nowrap; letter-spacing: .05px; }

/* dock */
.dock { position: absolute; left: 178px; top: 1640px; width: 2524px; height: 160px; padding-left: 8px; border-radius: 10px 10px 0 0; display: flex; background: radial-gradient(ellipse 150px 130px at 1610px 170px, rgba(190,185,190,.65), transparent), radial-gradient(ellipse 260px 240px at 1000px 30px, rgba(150,85,110,.6), transparent), #4f4d50; }
.dock > svg { width: 136px; height: 160px; }
.dot { fill: #000; }
.sep { width: 2px; height: 120px; margin: 20px 29px 0; background: #2b2b2b; }
.petals > * { mix-blend-mode: multiply; opacity: .92; }
```
